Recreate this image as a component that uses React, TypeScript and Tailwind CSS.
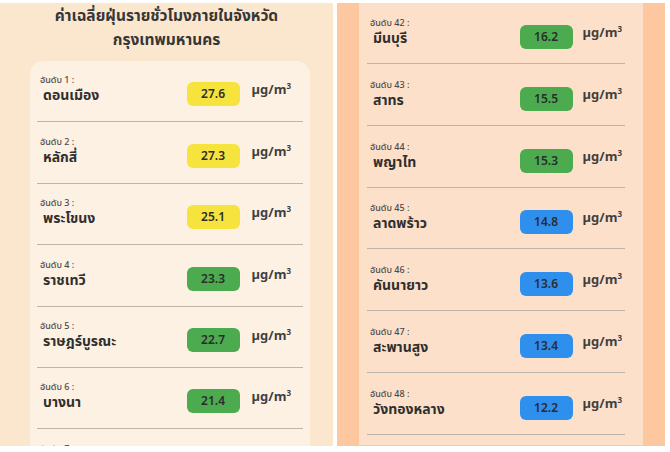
import React from 'react';

type Level = 'yellow' | 'green' | 'blue';

type Station = {
  rank: number;
  name: string;
  value: string;
  level: Level;
};

const leftStations: Station[] = [
  { rank: 1, name: 'ดอนเมือง', value: '27.6', level: 'yellow' },
  { rank: 2, name: 'หลักสี่', value: '27.3', level: 'yellow' },
  { rank: 3, name: 'พระโขนง', value: '25.1', level: 'yellow' },
  { rank: 4, name: 'ราชเทวี', value: '23.3', level: 'green' },
  { rank: 5, name: 'ราษฎร์บูรณะ', value: '22.7', level: 'green' },
  { rank: 6, name: 'บางนา', value: '21.4', level: 'green' },
  { rank: 7, name: 'บางพลัด', value: '21.2', level: 'green' },
];

const rightStations: Station[] = [
  { rank: 42, name: 'มีนบุรี', value: '16.2', level: 'green' },
  { rank: 43, name: 'สาทร', value: '15.5', level: 'green' },
  { rank: 44, name: 'พญาไท', value: '15.3', level: 'green' },
  { rank: 45, name: 'ลาดพร้าว', value: '14.8', level: 'blue' },
  { rank: 46, name: 'คันนายาว', value: '13.6', level: 'blue' },
  { rank: 47, name: 'สะพานสูง', value: '13.4', level: 'blue' },
  { rank: 48, name: 'วังทองหลาง', value: '12.2', level: 'blue' },
];

// badge colour per pm2.5 level
const badgeStyle = (level: Level) => {
  switch (level) {
    case 'yellow':
      return 'bg-[#f7e33d]';
    case 'green':
      return 'bg-[#4bab4e]';
    case 'blue':
      return 'bg-[#2f8fec]';
    default:
      return 'bg-gray-300';
  }
};

function Unit() {
  return (
    <span className="text-[13px] font-bold text-[#3f3f3f] leading-none whitespace-nowrap">
      µg/m<span className="relative -top-[5px] text-[8px]">3</span>
    </span>
  );
}

function Row({ station, wide }: { station: Station; wide?: boolean }) {
  return (
    <div className={`flex items-end border-b-[1.5px] border-[#bdb5ab] ${wide ? 'h-[61.8px] pb-[14px] pr-[3px]' : 'h-[61.4px] pb-[15px] pr-[12px]'}`}>
      <div className="flex-1 flex flex-col pl-[3px]">
        <span className="text-[9px] leading-[11px] font-medium text-[#4a4a4a]">อันดับ {station.rank} :</span>
        <span className="ml-[3px] text-[14px] leading-[20px] font-bold text-[#2f2f2f]">{station.name}</span>
      </div>
      <div className={`flex h-[24px] w-[53px] items-center justify-center rounded-[6px] text-[12px] font-semibold text-[#2c2c2c] ${badgeStyle(station.level)}`}>
        {station.value}
      </div>
      <div className={`${wide ? 'ml-[10px]' : 'ml-[12px]'} mb-[5px]`}>
        <Unit />
      </div>
    </div>
  );
}

export default function App() {
  return (
    <div
      className="flex h-[452px] w-[670px] overflow-hidden bg-white pt-[3px] pb-[6px]"
      style={{ fontFamily: '"Noto Sans Thai", "Noto Sans", "Liberation Sans", sans-serif' }}
    >
      {/* left panel: top of the list */}
      <div className="w-[333px] h-full overflow-hidden bg-[#fbe7ce] pl-[30px] pr-[23px]">
        <div className="flex flex-col items-center pt-[2px] -ml-[30px] -mr-[23px] text-[15.5px] leading-[24px] font-bold text-[#363636]">
          <span>ค่าเฉลี่ยฝุ่นรายชั่วโมงภายในจังหวัด</span>
          <span>กรุงเทพมหานคร</span>
        </div>
        <div className="mt-[8px] rounded-t-[14px] bg-[#fdf1e3] px-[7px]">
          {leftStations.map((s) => (
            <Row key={s.rank} station={s} />
          ))}
        </div>
      </div>

      <div className="w-[4px]" />

      {/* right panel: bottom of the list */}
      <div className="w-[328px] h-full overflow-hidden bg-[#fdc8a0] px-[22px]">
        <div className="h-full bg-[#fde0c9] pl-[8px] pr-[18px] -mt-[0.8px]">
          {rightStations.map((s) => (
            <Row key={s.rank} station={s} wide />
          ))}
        </div>
      </div>
    </div>
  );
}
